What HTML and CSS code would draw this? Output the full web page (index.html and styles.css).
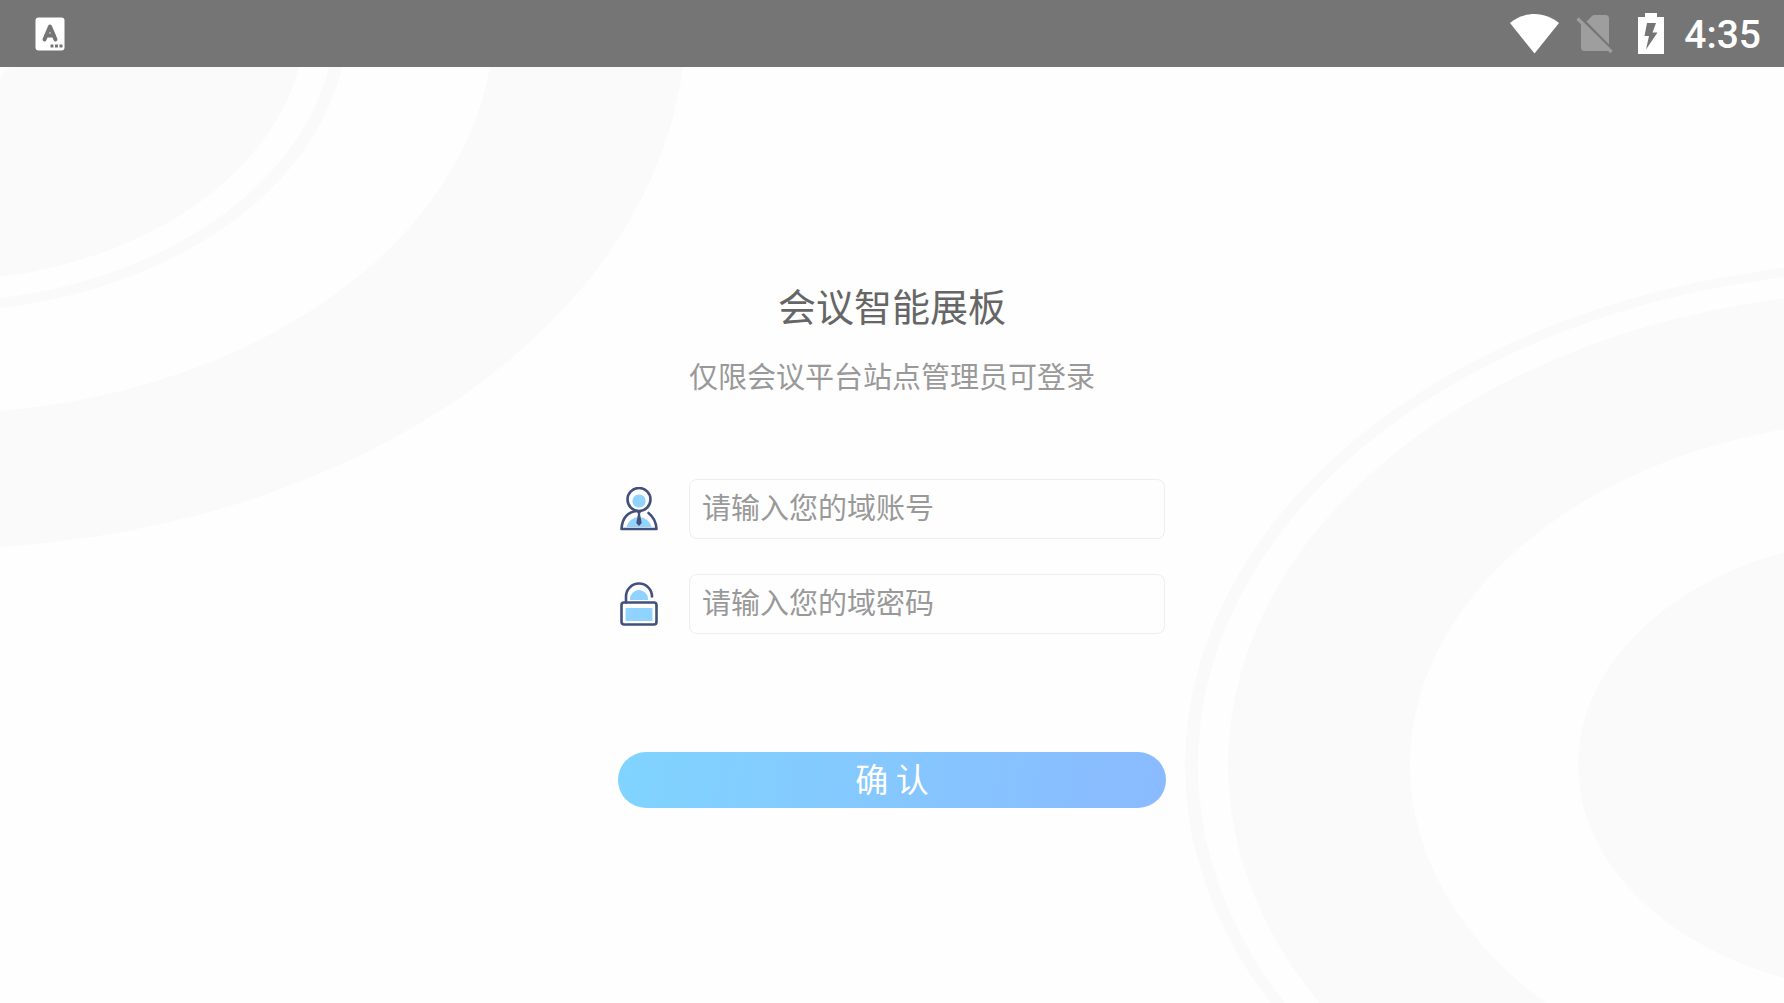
FILE: index.html
```html
<!DOCTYPE html>
<html lang="zh-CN">
<head>
<meta charset="utf-8">
<meta name="viewport" content="width=device-width, initial-scale=1">
<title>会议智能展板</title>
<link rel="stylesheet" href="styles.css">
</head>
<body>
<header class="status-bar">
  <svg class="ime-icon" viewBox="0 0 30 34" aria-hidden="true">
    <rect x="0.5" y="0.5" width="29" height="33" rx="3" fill="#fff"/>
    <path d="M9.500 22.500L15 9.500L20.500 22.500M11 18.500H19" fill="none" stroke="#757575" stroke-width="4" stroke-linecap="round" stroke-linejoin="round"/>
    <path d="M15.500 27.500h3v3h-3zM20 27.500h3v3h-3zM24.500 27.500h3v3h-3z" fill="#757575"/>
  </svg>
  <div class="status-icons">
    <svg class="wifi-icon" viewBox="0 0 50 40" aria-hidden="true">
      <path d="M0 9C7 3.500 15 0 24.500 0S42 3.500 49 9L24.500 39.500Z" fill="#fff"/>
    </svg>
    <svg class="sim-icon" viewBox="0 0 37 38" aria-hidden="true">
      <path d="M10.500 6.500L16 1Q17 0 18.500 0H29.500Q33 0 33 3.500V29.500ZM5 7.500L33 35.500V36H8.500Q5 36 5 32.500Z" fill="#9e9e9e"/>
      <path d="M1.500 3.500L35.500 37" stroke="#9e9e9e" stroke-width="3.400"/>
    </svg>
    <svg class="battery-icon" viewBox="0 0 26 41" aria-hidden="true">
      <path d="M7 0H19V4H26V41H0V4H7Z" fill="#fff"/>
      <path d="M9 10H18L14.500 19.500H19.500L8 36.500L11 23H6.500Z" fill="#757575"/>
    </svg>
    <time class="clock">4:35</time>
  </div>
</header>
<main class="stage">
  <svg class="backdrop" viewBox="0 0 1784 936" preserveAspectRatio="none" aria-hidden="true">
    <g class="rings-left">
      <path class="tint" d="M683 0A754 530 0 0 1 0 480V344A562 395 0 0 0 490 0Z"/>
      <path class="tint" d="M342 0A416 292 0 0 1 0 241V231A403 284 0 0 0 329 0Z"/>
      <path class="tint" d="M16 0H299A373 262 0 0 1 0 210V16Q0 0 16 0Z"/>
    </g>
    <g class="rings-right">
      <ellipse class="tint" cx="1904" cy="698" rx="719" ry="504"/>
      <ellipse class="plain" cx="1904" cy="698" rx="706" ry="495"/>
      <ellipse class="tint" cx="1904" cy="698" rx="676" ry="474"/>
      <ellipse class="plain" cx="1904" cy="698" rx="494" ry="346"/>
      <ellipse class="tint" cx="1904" cy="698" rx="326" ry="229"/>
    </g>
  </svg>
  <form class="login">
    <h1 class="title">会议智能展板</h1>
    <p class="subtitle">仅限会议平台站点管理员可登录</p>
    <div class="fields">
      <div class="field">
        <label for="account" aria-label="域账号">
          <svg class="field-icon" viewBox="0 0 38 44" aria-hidden="true">
            <circle cx="19" cy="14" r="6.600" fill="#91d3ff"/>
            <path d="M6.500 40A12.700 12 0 0 1 31.500 40Z" fill="#91d3ff"/>
            <circle cx="19" cy="12.500" r="11.500" fill="none" stroke="#42507b" stroke-width="2.600"/>
            <path d="M17 24Q2.500 25.500 1.500 42H36.500Q36 32 28.500 26" fill="none" stroke="#42507b" stroke-width="2.600" stroke-linecap="round" stroke-linejoin="round"/>
            <path d="M16.500 24H21.500L20 27L21.700 36L19 39L16.300 36L18 27Z" fill="#42507b"/>
          </svg>
        </label>
        <input class="field-input" id="account" type="text" placeholder="请输入您的域账号">
      </div>
      <div class="field">
        <label for="password" aria-label="域密码">
          <svg class="field-icon" viewBox="0 0 38 44" aria-hidden="true">
            <path d="M10 18V17A9 9 0 0 1 28 17V18Z" fill="#91d3ff"/>
            <rect x="5.500" y="26" width="27" height="13" rx="1" fill="#91d3ff"/>
            <rect x="1.500" y="20.500" width="35" height="22" rx="2.500" fill="none" stroke="#42507b" stroke-width="2.600"/>
            <path d="M6 20.500V14.500A13 13 0 0 1 32 14.500" fill="none" stroke="#42507b" stroke-width="2.600" stroke-linecap="round"/>
          </svg>
        </label>
        <input class="field-input" id="password" type="password" placeholder="请输入您的域密码">
      </div>
    </div>
    <button class="submit" type="submit">确 认</button>
  </form>
</main>
</body>
</html>
```

FILE: styles.css
```css
*,
*::before,
*::after {
  box-sizing: border-box;
}

body {
  margin: 0;
  min-height: 100vh;
  display: flex;
  flex-direction: column;
  background: #fefefe;
  font-family: "Noto Sans CJK SC", sans-serif;
}

svg {
  display: block;
}

.status-bar {
  display: flex;
  align-items: center;
  justify-content: space-between;
  height: 67px;
  padding: 0 23px 0 35px;
  background: #757575;
}

.ime-icon {
  width: 30px;
  height: 34px;
}

.status-icons {
  display: flex;
  align-items: center;
}

.wifi-icon {
  width: 50px;
  height: 40px;
  margin-right: 16px;
}

.sim-icon {
  width: 37px;
  height: 38px;
  margin-right: 25px;
}

.battery-icon {
  width: 26px;
  height: 41px;
  margin-right: 20px;
}

.clock {
  padding-top: 2px;
  color: #fff;
  font: 500 39px/44px Roboto, sans-serif;
}

.stage {
  position: relative;
  flex: 1;
  display: flex;
  justify-content: center;
  align-items: center;
  padding: 14px 24px 0;
}

.backdrop {
  position: absolute;
  inset: 0;
  width: 100%;
  height: 100%;
}

.tint {
  fill: #fafafa;
}

.plain {
  fill: #fefefe;
}

.login {
  position: relative;
  width: 100%;
  max-width: 548px;
  display: flex;
  flex-direction: column;
}

.title,
.subtitle {
  margin: 0;
  text-align: center;
  font-weight: 400;
}

.title {
  color: #666;
  font-size: 38px;
  line-height: 56px;
}

.subtitle {
  margin-top: 20px;
  color: #999;
  font-size: 29px;
  line-height: 44px;
}

.fields {
  display: flex;
  flex-direction: column;
  gap: 35px;
  margin-top: 82px;
}

.field {
  display: flex;
  align-items: center;
  gap: 31px;
  padding: 0 1px 0 2px;
}

.field-icon {
  width: 38px;
  height: 44px;
}

.field-input {
  flex: 1;
  min-width: 0;
  height: 60px;
  padding: 0 12px 6px;
  border: 1px solid #eee;
  border-radius: 8px;
  background: #fefefe;
  color: #666;
  font-family: inherit;
  font-size: 29px;
}

.field-input::placeholder {
  color: #999;
  opacity: 1;
}

.submit {
  height: 56px;
  margin-top: 118px;
  padding: 0 0 4px;
  border: 0;
  border-radius: 28px;
  background: linear-gradient(100deg, #80d4ff, #8abaff);
  color: #fff;
  font-family: inherit;
  font-size: 33px;
  line-height: 48px;
}
```
